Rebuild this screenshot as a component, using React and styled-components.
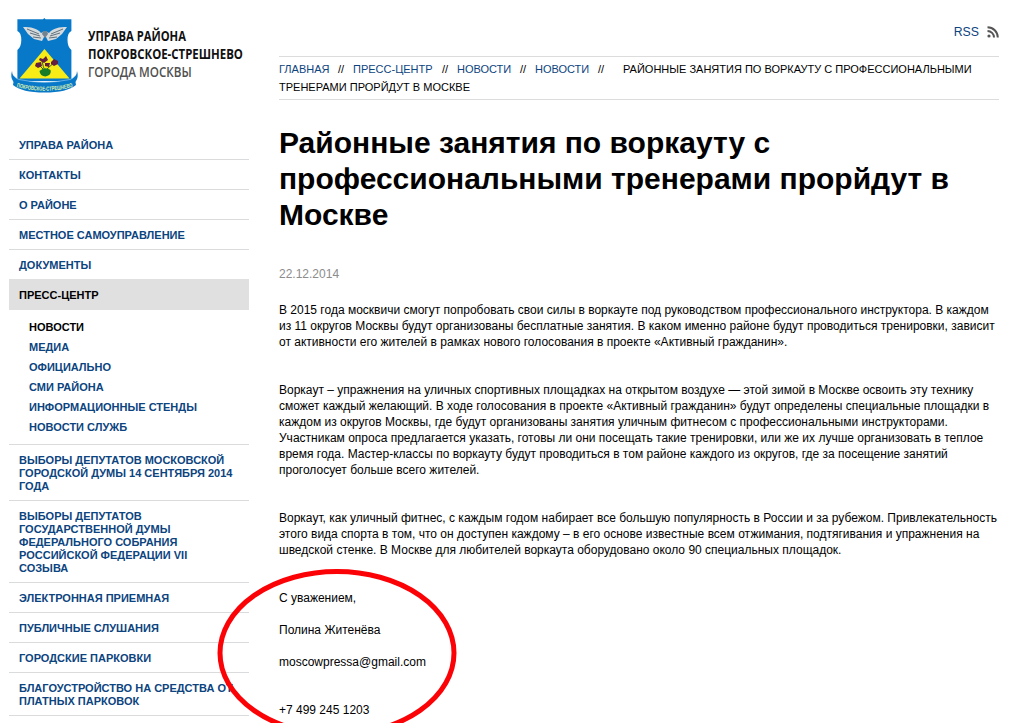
import React from 'react';
import styled, { createGlobalStyle } from 'styled-components';

const GlobalStyle = createGlobalStyle`
  body { margin: 0; background: #fff; color: #000; font-family: "Liberation Sans", Arial, sans-serif; overflow: hidden; }
  * { box-sizing: border-box; }
  a { color: inherit; text-decoration: none; }
`;

const Page = styled.div`
  position: relative;
  width: 1021px;
  height: 723px;
  overflow: hidden;
  display: grid;
  grid-template-columns: 240px 720px;
  column-gap: 30px;
  padding-left: 9px;
`;
const Sidebar = styled.aside``;
const Brand = styled.header`
  display: flex;
  height: 130px;
  padding: 17px 0 0 1px;
`;
const Emblem = styled.svg`
  width: 70px;
  height: 78px;
  flex: none;
`;
const BrandText = styled.div`
  margin: 9px 0 0 8px;
  font: 700 15px/18px "Open Sans", "Noto Sans", sans-serif;
  white-space: nowrap;
`;
const BrandLine = styled.div`
  width: max-content;
  transform-origin: left center;
  transform: scaleX(${p => p.$scale});
  font-weight: ${p => (p.$light ? 600 : 700)};
  color: ${p => (p.$light ? '#505050' : '#111')};
`;
const Nav = styled.nav`
  font-size: 11px;
  line-height: 13px;
  font-weight: bold;
  color: #0c4480;
  white-space: nowrap;
`;
const NavItem = styled.a`
  display: block;
  padding: 9px 10px 7px;
  border-bottom: 1px solid #d9dbdd;
  ${p => p.$active && 'background: #e0e0e0; color: #000; border-color: #e0e0e0; margin-top: -1px; padding-top: 10px;'}
`;
const SubNav = styled.div`
  padding: 7px 20px;
  border-bottom: 1px solid #d9dbdd;
`;
const SubItem = styled.a`
  display: block;
  line-height: 20px;
  color: ${p => (p.$active ? '#000' : 'inherit')};
`;
const Line = styled.span`
  display: block;
  width: max-content;
`;
const Main = styled.main``;
const Top = styled.div`
  display: flex;
  justify-content: flex-end;
  align-items: center;
  gap: 8px;
  height: 56px;
  padding-top: 7px;
  font-size: 12.3px;
  color: #0c4480;
`;
const Crumbs = styled.div`
  border: solid #dcdcdc;
  border-width: 1px 0;
  height: 44px;
  padding: 3px 0;
  font-size: 11px;
  line-height: 18px;
  white-space: nowrap;
`;
const CrumbRow = styled.div`
  display: flex;
`;
const Crumb = styled.a`
  flex: none;
  color: #0c4480;
  width: ${p => p.$w}px;
`;
const Sep = styled.span`
  flex: none;
  width: ${p => p.$w}px;
`;
const Title = styled.h1`
  margin: 25px 0 0;
  font-size: 30px;
  line-height: 36px;
  white-space: nowrap;
`;
const DateLine = styled.div`
  margin-top: 33px;
  font-size: 12px;
  line-height: 16px;
  color: #8c8c8c;
`;
const Para = styled.p`
  margin: ${p => p.$gap}px 0 0;
  font-size: 12px;
  line-height: 16px;
  white-space: nowrap;
`;
const Highlight = styled.svg`
  position: absolute;
  left: 210px;
  top: 560px;
  pointer-events: none;
`;

const sections = ['УПРАВА РАЙОНА', 'КОНТАКТЫ', 'О РАЙОНЕ', 'МЕСТНОЕ САМОУПРАВЛЕНИЕ', 'ДОКУМЕНТЫ'];
const pressItems = ['НОВОСТИ', 'МЕДИА', 'ОФИЦИАЛЬНО', 'СМИ РАЙОНА', 'ИНФОРМАЦИОННЫЕ СТЕНДЫ', 'НОВОСТИ СЛУЖБ'];
const moreSections = [
  ['ВЫБОРЫ ДЕПУТАТОВ МОСКОВСКОЙ', 'ГОРОДСКОЙ ДУМЫ 14 СЕНТЯБРЯ 2014', 'ГОДА'],
  ['ВЫБОРЫ ДЕПУТАТОВ', 'ГОСУДАРСТВЕННОЙ ДУМЫ', 'ФЕДЕРАЛЬНОГО СОБРАНИЯ', 'РОССИЙСКОЙ ФЕДЕРАЦИИ VII', 'СОЗЫВА'],
  ['ЭЛЕКТРОННАЯ ПРИЕМНАЯ'],
  ['ПУБЛИЧНЫЕ СЛУШАНИЯ'],
  ['ГОРОДСКИЕ ПАРКОВКИ'],
  ['БЛАГОУСТРОЙСТВО НА СРЕДСТВА ОТ', 'ПЛАТНЫХ ПАРКОВОК'],
];
const paras = [
  [20, [
    'В 2015 года москвичи смогут попробовать свои силы в воркауте под руководством профессионального инструктора. В каждом',
    'из 11 округов Москвы будут организованы бесплатные занятия. В каком именно районе будут проводиться тренировки, зависит',
    'от активности его жителей в рамках нового голосования в проекте «Активный гражданин».']],
  [32, [
    'Воркаут – упражнения на уличных спортивных площадках на открытом воздухе — этой зимой в Москве освоить эту технику',
    'сможет каждый желающий. В ходе голосования в проекте «Активный гражданин» будут определены специальные площадки в',
    'каждом из округов Москвы, где будут организованы занятия уличным фитнесом с профессиональными инструкторами.',
    'Участникам опроса предлагается указать, готовы ли они посещать такие тренировки, или же их лучше организовать в теплое',
    'время года. Мастер-классы по воркауту будут проводиться в том районе каждого из округов, где за посещение занятий',
    'проголосует больше всего жителей.']],
  [32, [
    'Воркаут, как уличный фитнес, с каждым годом набирает все большую популярность в России и за рубежом. Привлекательность',
    'этого вида спорта в том, что он доступен каждому – в его основе известные всем отжимания, подтягивания и упражнения на',
    'шведской стенке. В Москве для любителей воркаута оборудовано около 90 специальных площадок.']],
  [32, ['С уважением,']],
  [16, ['Полина Житенёва']],
  [16, ['moscowpressa@gmail.com']],
  [32, ['+7 499 245 1203']],
];

const Lines = ({ items }) => items.map(t => <Line key={t}>{t}</Line>);

const CoatOfArms = () => (
  <Emblem viewBox="0 0 70 78">
    <path d="M7.4 2.3H33L34.3 1L35.6 2.3H61.4V14Q57.500 15.500 57.500 23Q57.500 30 61.400 33V64H7.400V33Q11.300 30 11.300 23Q11.300 15.500 7.400 14Z" fill="#0878c9" />
    <path d="M34.5 32L59.5 61.5H9.5Z" fill="#f8ec16" />
    <path d="M13 10C21 10 27 11 31 16L35 14L39 16C43 11 49 10 57 10L52 17L46 22L38 24L36 20L34 20L32 24L24 22L18 17Z" fill="#d5dadd" />
    <path d="M17 12L29 17M20 16L30 19M23 20L31 21M53 12L41 17M50 16L40 19M47 20L39 21" stroke="#61717b" strokeWidth="1" fill="none" />
    <path d="M32 17L35 21L38 17L37 14H33Z" fill="#728390" />
    <path d="M35.500 55Q33 50 32 44M36 53Q40 49 45 45M34 53L29 48" stroke="#37660f" strokeWidth="1" fill="none" />
    <path d="M29.500 54Q35 49 40.500 53Q42 58 35.500 59.500Q30 59 29.500 54Z" fill="#187b25" />
    <path d="M30 41L33 42L36 39L38 43L34 46L29 43Z M41 45L44 42L48 44L48 47L44 49L41 47Z M26 46L31 45L32 49L28 51L25 49Z M35 46L40 46L39 50L35 49Z" fill="#64203e" />
    <path d="M2 54Q2 60 9 62.500Q34 68 60 62.500Q67 60 67 54Q69 60 65.500 65L66 68Q57 75.500 34.500 75.500Q12 75.500 3 68L3.500 65Q0 60 2 54Z" fill="#0878c9" />
    <path d="M4 59Q6 61.500 9 62.500Q34 68 60 62.500Q63 61.500 65 59" fill="none" stroke="#8cc6ee" strokeWidth="0.700" />
    <path id="ribbon" d="M6.500 70Q34.500 77.500 62.500 70" fill="none" />
    <text fill="#d8edaa" fontFamily="Liberation Sans, sans-serif" fontSize="6" fontWeight="bold">
      <textPath href="#ribbon" textLength="57" lengthAdjust="spacingAndGlyphs">ПОКРОВСКОЕ-СТРЕШНЕВО</textPath>
    </text>
  </Emblem>
);

export default function App() {
  return (
    <Page>
      <GlobalStyle />
      <Sidebar>
        <Brand>
          <CoatOfArms />
          <BrandText>
            <BrandLine $scale={0.747}>УПРАВА РАЙОНА</BrandLine>
            <BrandLine $scale={0.761}>ПОКРОВСКОЕ-СТРЕШНЕВО</BrandLine>
            <BrandLine $scale={0.777} $light>ГОРОДА МОСКВЫ</BrandLine>
          </BrandText>
        </Brand>
        <Nav>
          {sections.map(s => <NavItem key={s}><Lines items={[s]} /></NavItem>)}
          <NavItem $active><Lines items={['ПРЕСС-ЦЕНТР']} /></NavItem>
          <SubNav>
            {pressItems.map((s, n) => <SubItem key={s} $active={n === 0}>{s}</SubItem>)}
          </SubNav>
          {moreSections.map(i => <NavItem key={i[0]}><Lines items={i} /></NavItem>)}
        </Nav>
      </Sidebar>
      <Main>
        <Top>
          <span>RSS</span>
          <svg width="12" height="12" viewBox="0 0 12 12" fill="none" stroke="#555" strokeWidth="2">
            <circle cx="2" cy="10" r="1.6" fill="#555" stroke="none" />
            <path d="M0.5 5A6.5 6.5 0 0 1 7 11.5M0.5 1.2A10.3 10.3 0 0 1 10.8 11.5" />
          </svg>
        </Top>
        <Crumbs>
          <CrumbRow>
            <Crumb $w={59}>ГЛАВНАЯ</Crumb><Sep $w={15}>//</Sep>
            <Crumb $w={89}>ПРЕСС-ЦЕНТР</Crumb><Sep $w={15}>//</Sep>
            <Crumb $w={63}>НОВОСТИ</Crumb><Sep $w={15}>//</Sep>
            <Crumb $w={63}>НОВОСТИ</Crumb><Sep $w={25}>//</Sep>
            <Line>РАЙОННЫЕ ЗАНЯТИЯ ПО ВОРКАУТУ С ПРОФЕССИОНАЛЬНЫМИ</Line>
          </CrumbRow>
          <Line>ТРЕНЕРАМИ ПРОРЙДУТ В МОСКВЕ</Line>
        </Crumbs>
        <Title>
          <Lines items={['Районные занятия по воркауту с', 'профессиональными тренерами прорйдут в', 'Москве']} />
        </Title>
        <DateLine>22.12.2014</DateLine>
        {paras.map(([gap, items]) => <Para key={items[0]} $gap={gap}><Lines items={items} /></Para>)}
      </Main>
      <Highlight width="256" height="163" viewBox="0 0 256 163">
        <ellipse cx="127" cy="93" rx="117" ry="81.500" fill="none" stroke="#fb0207" strokeWidth="5" />
      </Highlight>
    </Page>
  );
}
